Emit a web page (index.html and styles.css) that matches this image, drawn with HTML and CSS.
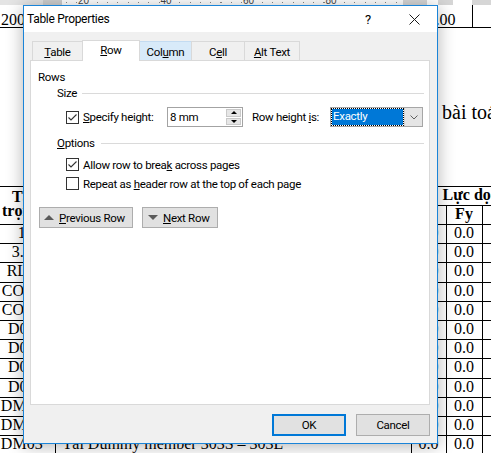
FILE: index.html
```html
<!DOCTYPE html>
<html lang="en">
<head>
<meta charset="utf-8">
<title>Table Properties</title>
<link rel="stylesheet" href="styles.css">
</head>
<body>
<div class="doc">
  <div class="ruler">
    <div class="rseg r-left"></div>
    <div class="rseg r-marker"></div>
    <div class="rseg r-main">
      <span class="rnum">20</span><span class="rnum">40</span><span class="rnum">60</span><span class="rnum">80</span>
    </div>
    <div class="rseg r-col"></div>
    <div class="rseg r-w1"></div>
    <div class="rseg r-col2"></div>
    <div class="rseg r-w2"></div>
    <div class="rseg r-end"></div>
  </div>
  <table class="toptable">
    <colgroup><col class="tc1"><col class="tc2"><col class="tc3"></colgroup>
    <tr><td class="tl">200</td><td class="tc">1.00</td><td></td></tr>
  </table>
  <p class="para">bài toán</p>
  <table class="main">
    <colgroup><col class="c1"><col class="c2"><col class="c3"><col class="c4"><col class="c5"></colgroup>
    <tr class="h1"><th rowspan="2" class="name"><span class="l1">Tải</span><span class="l2">trọng</span></th><th rowspan="2"></th><th colspan="3" class="force">Lực dọc</th></tr>
    <tr class="h2"><th>Fx</th><th>Fy</th><th>Fz</th></tr>
    <tr><td class="name">1</td><td class="desc"></td><td>0.0</td><td>0.0</td><td>0.0</td></tr>
    <tr><td class="name">3.1</td><td class="desc"></td><td>0.0</td><td>0.0</td><td>0.0</td></tr>
    <tr><td class="name">RLL</td><td class="desc"></td><td>0.0</td><td>0.0</td><td>0.0</td></tr>
    <tr><td class="name">COL1</td><td class="desc"></td><td>0.0</td><td>0.0</td><td>0.0</td></tr>
    <tr><td class="name">COL2</td><td class="desc"></td><td>0.0</td><td>0.0</td><td>0.0</td></tr>
    <tr><td class="name">D01</td><td class="desc"></td><td>0.0</td><td>0.0</td><td>0.0</td></tr>
    <tr><td class="name">D02</td><td class="desc"></td><td>0.0</td><td>0.0</td><td>0.0</td></tr>
    <tr><td class="name">D03</td><td class="desc"></td><td>0.0</td><td>0.0</td><td>0.0</td></tr>
    <tr><td class="name">D04</td><td class="desc"></td><td>0.0</td><td>0.0</td><td>0.0</td></tr>
    <tr><td class="name">DM01</td><td class="desc"></td><td>0.0</td><td>0.0</td><td>0.0</td></tr>
    <tr><td class="name">DM02</td><td class="desc"></td><td>0.0</td><td>0.0</td><td>0.0</td></tr>
    <tr><td class="name">DM03</td><td class="desc">Tải Dummy member 303S – 303L</td><td>0.0</td><td>0.0</td><td>0.0</td></tr>
  </table>
</div>

<div class="dialog">
  <div class="titlebar">
    <div class="title">Table Properties</div>
    <div class="tbtn">?</div>
    <div class="tbtn"><svg width="11" height="11" viewBox="0 0 11 11"><path d="M0.5 0.5L10.5 10.5M10.5 0.5L0.5 10.5" stroke="#1a1a1a" stroke-width="1" fill="none"/></svg></div>
  </div>
  <div class="dbody">
    <div class="tabs">
      <div class="tab w-table"><span><u>T</u>able</span></div>
      <div class="tab w-row sel"><span><u>R</u>ow</span></div>
      <div class="tab w-col hover"><span>Col<u>u</u>mn</span></div>
      <div class="tab w-cell"><span>C<u>e</u>ll</span></div>
      <div class="tab w-alt"><span><u>A</u>lt Text</span></div>
    </div>
    <div class="panel">
      <div class="lbl">Rows</div>
      <div class="group">
        <div class="ghead"><span class="lbl">Size</span><span class="sep"></span></div>
        <div class="sizerow">
          <span class="cb"><svg width="11" height="11" viewBox="0 0 11 11"><path d="M1.5 5.5L4 8L9.5 2.5" stroke="#333" stroke-width="1.1" fill="none"/></svg></span>
          <span class="lbl spec"><u>S</u>pecify height:</span>
          <span class="spin"><span class="spin-val">8 mm</span><span class="spin-btns"><span class="sb"><span class="tri-up"></span></span><span class="sb"><span class="tri-down"></span></span></span></span>
          <span class="lbl rhi">Row height <u>i</u>s:</span>
          <span class="combo"><span class="combo-val"><span class="hl">Exactly</span></span><span class="combo-arrow"><svg width="8" height="5" viewBox="0 0 8 5"><path d="M0.5 0.5L4 4L7.5 0.5" stroke="#606060" stroke-width="1" fill="none"/></svg></span></span>
        </div>
        <div class="ghead opt"><span class="lbl"><u>O</u>ptions</span><span class="sep"></span></div>
        <div class="chkrow first">
          <span class="cb"><svg width="11" height="11" viewBox="0 0 11 11"><path d="M1.5 5.5L4 8L9.5 2.5" stroke="#333" stroke-width="1.1" fill="none"/></svg></span>
          <span class="lbl">Allow row to brea<u>k</u> across pages</span>
        </div>
        <div class="chkrow">
          <span class="cb"></span>
          <span class="lbl">Repeat as <u>h</u>eader row at the top of each page</span>
        </div>
      </div>
      <div class="navrow">
        <div class="btn prev"><span class="ntri up"></span><span><u>P</u>revious Row</span></div>
        <div class="btn next"><span class="ntri down"></span><span><u>N</u>ext Row</span></div>
      </div>
    </div>
    <div class="footer">
      <div class="btn fbtn ok">OK</div>
      <div class="btn fbtn">Cancel</div>
    </div>
  </div>
</div>
</body>
</html>
```

FILE: styles.css
```css
* { box-sizing: border-box; }
html, body { margin: 0; padding: 0; }
body {
  width: 491px;
  height: 453px;
  overflow: hidden;
  position: relative;
  background: #ffffff;
}

/* ---------- background document ---------- */
.doc {
  font-family: "Liberation Serif", "Times New Roman", serif;
  font-size: 16px;
  color: #000;
}
.ruler {
  height: 5px;
  display: flex;
  overflow: hidden;
  font-family: "Liberation Sans", Arial, sans-serif;
}
.rseg { height: 5px; flex: none; }
.r-left { width: 43px; background: #e4e4e4; }
.r-marker { width: 19px; background: #cfcfcf; }
.r-main {
  width: 341px;
  background-color: #fff;
  background-image: repeating-linear-gradient(90deg, #8a8a8a 0 1px, transparent 1px 10.3px);
  background-size: 100% 1px;
  background-position: 4px 2px;
  background-repeat: no-repeat;
  display: flex;
  padding-left: 16px;
}
.rnum {
  flex: none;
  font-size: 10px;
  line-height: 8px;
  color: #444;
  margin-top: -3px;
  background: #fff;
  height: 8px;
  width: 12px;
  margin-right: 70.5px;
}
.r-col { width: 24px; background: #d6d6d6; }
.r-w1 { width: 11px; background: #fff; }
.r-col2 { width: 15px; background: #d6d6d6; }
.r-w2 { width: 19px; background: #fff; }
.r-end { width: 40px; background: #d6d6d6; }

.toptable {
  border-collapse: collapse;
  table-layout: fixed;
  width: 532px;
}
.tc1 { width: 411px; }
.tc2 { width: 61px; }
.tc3 { width: 60px; }
.toptable td {
  height: 22px;
  padding: 0 0 1px;
  line-height: 12px;
  vertical-align: bottom;
  border-bottom: 1px solid #000;
  border-right: 1px solid #000;
}
.toptable td.tl { text-align: left; padding-left: 1px; white-space: nowrap; overflow: hidden; }
.toptable td.tc { text-align: center; }

.para {
  margin: 72px 0 0;
  padding-left: 442px;
  font-size: 20px;
  line-height: 24px;
  white-space: nowrap;
  height: 86px;
}

.main {
  border-collapse: collapse;
  table-layout: fixed;
  width: 542px;
}
.c1 { width: 55px; }
.c2 { width: 356px; }
.c3 { width: 35px; }
.c4 { width: 36px; }
.c5 { width: 60px; }
.main td, .main th {
  border: 1px solid #000;
  padding: 0 0 2px;
  line-height: 16.2px;
  text-align: center;
  white-space: nowrap;
  overflow: hidden;
}
.main th { font-weight: bold; }
.main td:first-child, .main th:first-child { border-left: none; }
.main .name { padding-right: 11px; }
.main th.name { text-align: left; line-height: 14px; padding: 0 0 2px; }
.main th.name .l1 { display: block; padding-left: 12px; }
.main th.name .l2 { display: block; padding-left: 2px; }
.main td.desc { text-align: left; padding-left: 7px; }
.main th.force { text-align: left; padding-left: 31px; }

/* ---------- dialog ---------- */
.dialog {
  position: absolute;
  left: 23px;
  top: 5px;
  width: 415px;
  height: 439px;
  border: 1px solid #1a84d8;
  background: #f0f0f0;
  box-shadow: 0 2px 16px rgba(0, 0, 0, 0.3);
  display: flex;
  flex-direction: column;
  font-family: Roboto, "Segoe UI", sans-serif;
  font-size: 11.5px;
  letter-spacing: -0.3px;
  color: #000;
}
.titlebar {
  height: 26px;
  flex: none;
  background: #fff;
  display: flex;
  align-items: center;
}
.title {
  flex: 1;
  padding-left: 3px;
  font-size: 12px;
}
.tbtn {
  width: 46px;
  height: 26px;
  display: flex;
  align-items: center;
  justify-content: center;
  font-size: 13px;
}
.dbody {
  flex: 1;
  display: flex;
  flex-direction: column;
  padding: 8px 7px 0 6px;
}
.tabs {
  height: 20px;
  display: flex;
  align-items: flex-end;
  padding-left: 2px;
  position: relative;
  z-index: 1;
}
.tab {
  height: 19px;
  border: 1px solid #d9d9d9;
  border-bottom: none;
  margin-left: -1px;
  background: #f0f0f0;
  display: flex;
  align-items: center;
  justify-content: center;
  padding-top: 1px;
}
.tab:first-child { margin-left: 0; }
.tab.sel {
  height: 21px;
  margin-bottom: -1px;
  background: #fff;
  position: relative;
  z-index: 2;
  padding-top: 0;
  padding-bottom: 2px;
}
.tab.hover { background: #d8eaf9; border-color: #c3dbf1; border-left-color: #d9d9d9; }
.w-table { width: 51px; }
.w-row { width: 58px; }
.w-col { width: 53px; }
.w-cell { width: 54px; }
.w-alt { width: 56px; }

.panel {
  height: 345px;
  flex: none;
  background: #fff;
  border: 1px solid #d9d9d9;
  padding: 8px 5px 0 7px;
}
.lbl { line-height: 16px; white-space: nowrap; }
.group { margin-left: 19px; }
.ghead { display: flex; align-items: center; height: 16px; }
.sep { flex: 1; height: 1px; background: #dadada; margin-left: 5px; }
.ghead.opt { margin-top: 8px; }
.ghead.opt .sep { margin-left: 6px; }

.sizerow {
  display: flex;
  align-items: center;
  height: 20px;
  margin-top: 6px;
  margin-left: 9px;
}
.cb {
  width: 13px;
  height: 13px;
  flex: none;
  border: 1px solid #333;
  background: #fff;
  display: flex;
  align-items: center;
  justify-content: center;
}
.cb + .lbl { margin-left: 4px; }
.spec { width: 84px; }
.spin {
  width: 76px;
  height: 20px;
  border: 1px solid #a3a3a3;
  display: flex;
  background: #fff;
}
.spin-val { flex: 1; padding-left: 2px; line-height: 18px; }
.spin-btns { width: 16px; display: flex; flex-direction: column; padding: 1px 1px 1px 0; gap: 1px; }
.sb {
  flex: 1;
  background: #e6e6e6;
  border: 1px solid #c9c9c9;
  display: flex;
  align-items: center;
  justify-content: center;
}
.tri-up { width: 0; height: 0; border-left: 3px solid transparent; border-right: 3px solid transparent; border-bottom: 3px solid #000; }
.tri-down { width: 0; height: 0; border-left: 3px solid transparent; border-right: 3px solid transparent; border-top: 3px solid #000; }
.rhi { margin-left: 9px; width: 78px; }
.combo {
  width: 93px;
  height: 20px;
  border: 1px solid #a6a6a6;
  background: #fff;
  display: flex;
}
.combo-val { flex: 1; padding: 1px; display: flex; }
.hl {
  flex: 1;
  background: #0078d7;
  color: #fff;
  line-height: 14px;
  padding-left: 1px;
  outline: 1px dotted #000;
  outline-offset: 0;
}
.combo-arrow {
  width: 18px;
  background: #e5e5e5;
  border-left: 1px solid #cfcfcf;
  display: flex;
  align-items: center;
  justify-content: center;
}

.chkrow {
  display: flex;
  align-items: center;
  height: 19px;
  margin-left: 9px;
}
.chkrow.first { margin-top: 4px; }

.navrow {
  display: flex;
  gap: 9px;
  margin-top: 14px;
  margin-left: 1px;
}
.btn {
  height: 21px;
  background: #e1e1e1;
  border: 1px solid #adadad;
  display: flex;
  align-items: center;
  white-space: nowrap;
}
.prev { width: 94px; padding-left: 4px; }
.next { width: 76px; padding-left: 5px; }
.ntri { width: 0; height: 0; margin-right: 5px; border-left: 5px solid transparent; border-right: 5px solid transparent; }
.ntri.up { border-bottom: 5px solid #5a5a5a; }
.ntri.down { border-top: 5px solid #5a5a5a; }

.footer {
  flex: 1;
  display: flex;
  justify-content: flex-end;
  gap: 10px;
  padding: 9px 0 0;
}
.fbtn { width: 74px; height: 22px; justify-content: center; }
.fbtn.ok { border: 2px solid #0078d7; }
```
